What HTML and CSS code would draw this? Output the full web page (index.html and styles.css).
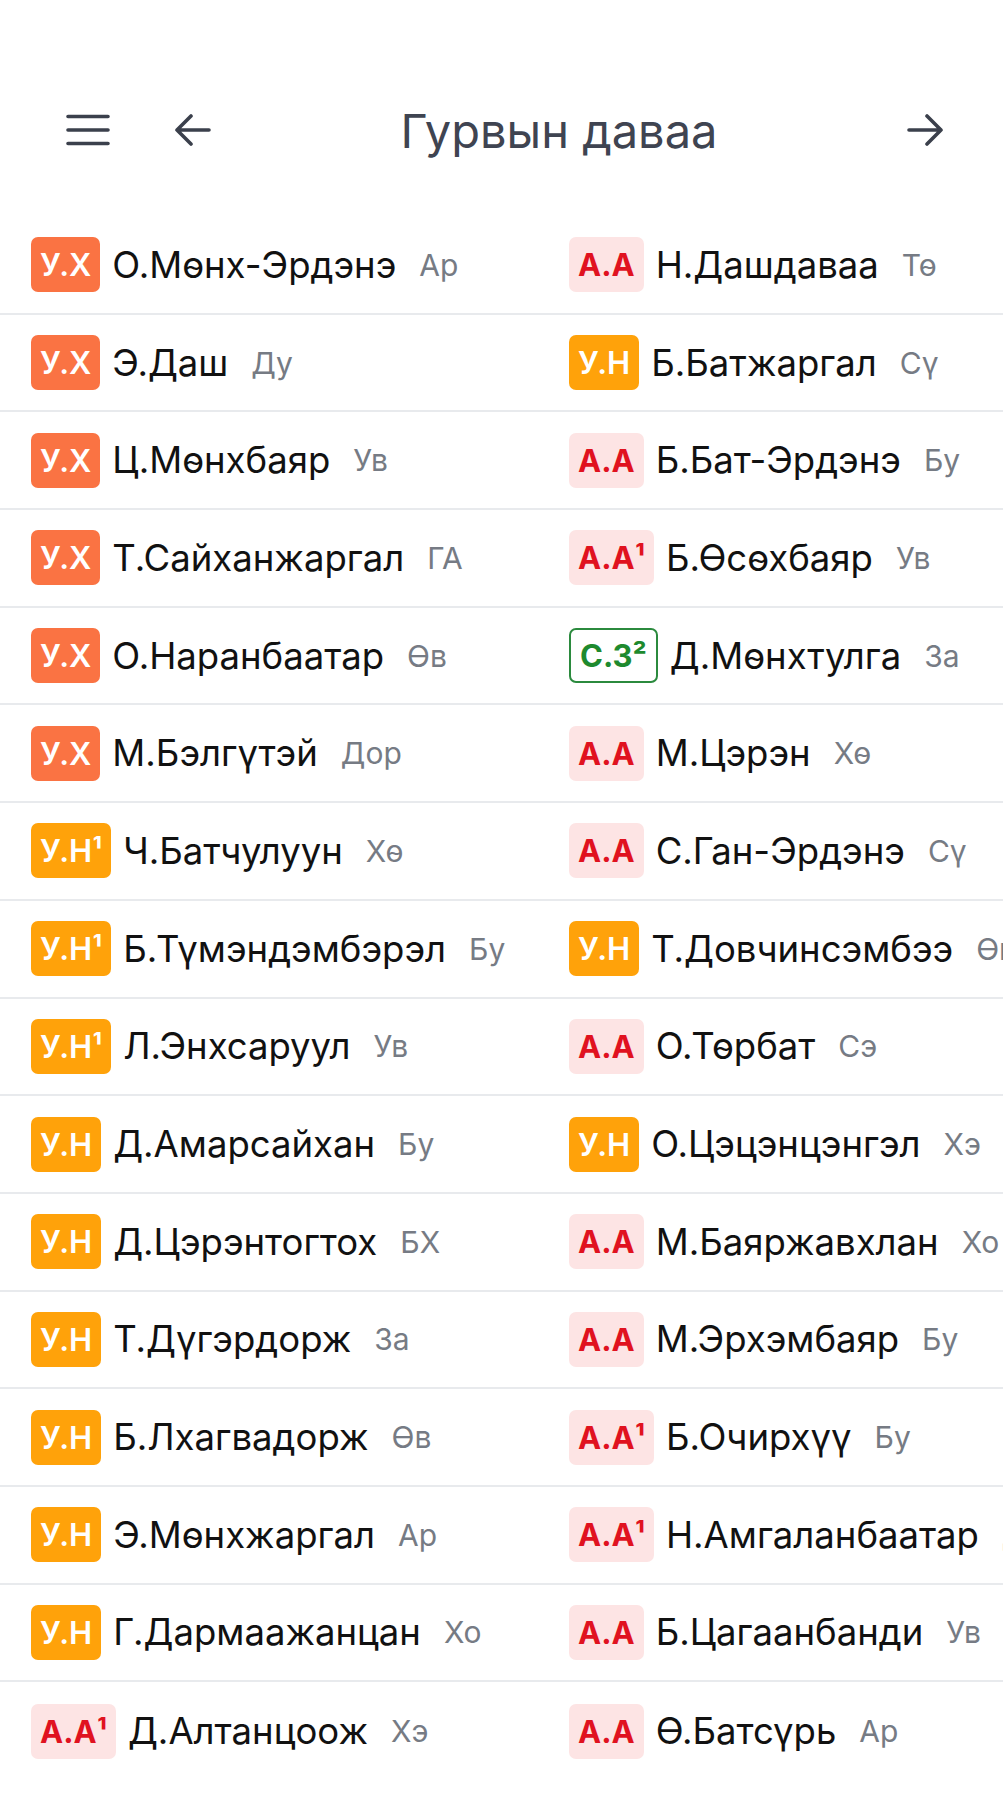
FILE: index.html
```html
<!DOCTYPE html>
<html lang="mn">
<head>
    <meta charset="UTF-8">
    <meta name="viewport" content="width=device-width, initial-scale=1.0">
    <title>Гурвын даваа</title>
    <link rel="stylesheet" href="styles.css">
</head>
<body>
    <header class="top-bar">
        <button class="icon-btn menu-btn" aria-label="Menu">
            <svg width="44" height="32" viewBox="0 0 44 32"><path d="M2 2.5H42M2 16H42M2 29.5H42"/></svg>
        </button>
        <button class="icon-btn" aria-label="Previous">
            <svg width="36" height="32" viewBox="0 0 36 32"><path d="M34 16H2M16 2L2 16L16 30"/></svg>
        </button>
        <h1 class="title">Гурвын даваа</h1>
        <button class="icon-btn" aria-label="Next">
            <svg width="36" height="32" viewBox="0 0 36 32"><path d="M2 16H34M20 2L34 16L20 30"/></svg>
        </button>
    </header>

    <div class="list-wrap">
        <div class="list">
            <div class="row"><span class="badge ux">У.Х</span><span class="name">О.Мөнх-Эрдэнэ</span><span class="region">Ар</span></div>
            <div class="row"><span class="badge aa">А.А</span><span class="name">Н.Дашдаваа</span><span class="region">Тө</span></div>

            <div class="row"><span class="badge ux">У.Х</span><span class="name">Э.Даш</span><span class="region">Ду</span></div>
            <div class="row"><span class="badge un">У.Н</span><span class="name">Б.Батжаргал</span><span class="region">Сү</span></div>

            <div class="row"><span class="badge ux">У.Х</span><span class="name">Ц.Мөнхбаяр</span><span class="region">Ув</span></div>
            <div class="row"><span class="badge aa">А.А</span><span class="name">Б.Бат-Эрдэнэ</span><span class="region">Бу</span></div>

            <div class="row"><span class="badge ux">У.Х</span><span class="name">Т.Сайханжаргал</span><span class="region">ГА</span></div>
            <div class="row"><span class="badge aa">А.А¹</span><span class="name">Б.Өсөхбаяр</span><span class="region">Ув</span></div>

            <div class="row"><span class="badge ux">У.Х</span><span class="name">О.Наранбаатар</span><span class="region">Өв</span></div>
            <div class="row"><span class="badge sz">С.З²</span><span class="name">Д.Мөнхтулга</span><span class="region">За</span></div>

            <div class="row"><span class="badge ux">У.Х</span><span class="name">М.Бэлгүтэй</span><span class="region">Дор</span></div>
            <div class="row"><span class="badge aa">А.А</span><span class="name">М.Цэрэн</span><span class="region">Хө</span></div>

            <div class="row"><span class="badge un">У.Н¹</span><span class="name">Ч.Батчулуун</span><span class="region">Хө</span></div>
            <div class="row"><span class="badge aa">А.А</span><span class="name">С.Ган-Эрдэнэ</span><span class="region">Сү</span></div>

            <div class="row"><span class="badge un">У.Н¹</span><span class="name">Б.Түмэндэмбэрэл</span><span class="region">Бу</span></div>
            <div class="row"><span class="badge un">У.Н</span><span class="name">Т.Довчинсэмбээ</span><span class="region">Өв</span></div>

            <div class="row"><span class="badge un">У.Н¹</span><span class="name">Л.Энхсаруул</span><span class="region">Ув</span></div>
            <div class="row"><span class="badge aa">А.А</span><span class="name">О.Төрбат</span><span class="region">Сэ</span></div>

            <div class="row"><span class="badge un">У.Н</span><span class="name">Д.Амарсайхан</span><span class="region">Бу</span></div>
            <div class="row"><span class="badge un">У.Н</span><span class="name">О.Цэцэнцэнгэл</span><span class="region">Хэ</span></div>

            <div class="row"><span class="badge un">У.Н</span><span class="name">Д.Цэрэнтогтох</span><span class="region">БХ</span></div>
            <div class="row"><span class="badge aa">А.А</span><span class="name">М.Баяржавхлан</span><span class="region">Хо</span></div>

            <div class="row"><span class="badge un">У.Н</span><span class="name">Т.Дүгэрдорж</span><span class="region">За</span></div>
            <div class="row"><span class="badge aa">А.А</span><span class="name">М.Эрхэмбаяр</span><span class="region">Бу</span></div>

            <div class="row"><span class="badge un">У.Н</span><span class="name">Б.Лхагвадорж</span><span class="region">Өв</span></div>
            <div class="row"><span class="badge aa">А.А¹</span><span class="name">Б.Очирхүү</span><span class="region">Бу</span></div>

            <div class="row"><span class="badge un">У.Н</span><span class="name">Э.Мөнхжаргал</span><span class="region">Ар</span></div>
            <div class="row"><span class="badge aa">А.А¹</span><span class="name">Н.Амгаланбаатар</span><span class="region">Ду</span></div>

            <div class="row"><span class="badge un">У.Н</span><span class="name">Г.Дармаажанцан</span><span class="region">Хо</span></div>
            <div class="row"><span class="badge aa">А.А</span><span class="name">Б.Цагаанбанди</span><span class="region">Ув</span></div>

            <div class="row"><span class="badge aa">А.А¹</span><span class="name">Д.Алтанцоож</span><span class="region">Хэ</span></div>
            <div class="row"><span class="badge aa">А.А</span><span class="name">Ө.Батсүрь</span><span class="region">Ар</span></div>
        </div>
    </div>
</body>
</html>
```

FILE: styles.css
```css
body {
    margin: 0;
    font-family: Inter, Roboto, "Noto Sans", sans-serif;
    background-color: #fff;
    color: #111;
    overflow-x: hidden;
}
.top-bar {
    display: flex;
    align-items: center;
    height: 68px;
    margin-top: 96px;
    margin-bottom: 53px;
    padding: 0 60px 0 66px;
}
.icon-btn {
    display: flex;
    background: none;
    border: none;
    padding: 0;
    cursor: pointer;
}
.icon-btn svg path {
    fill: none;
    stroke: #3b404c;
    stroke-width: 3.6;
    stroke-linecap: round;
    stroke-linejoin: round;
}
.menu-btn {
    margin-right: 65px;
}
.title {
    flex: 1;
    margin: 0;
    text-align: center;
    font-size: 47px;
    font-weight: 400;
    color: #3f4451;
}
.list-wrap {
    width: 100%;
    overflow: hidden;
}
.list {
    display: grid;
    grid-template-columns: 538px 538px;
    width: 1076px;
}
.row {
    display: flex;
    align-items: center;
    box-sizing: border-box;
    height: 97.7px;
    padding-left: 31px;
    border-bottom: 2px solid #e8eaed;
    white-space: nowrap;
}
.row:nth-last-child(-n+2) {
    border-bottom: none;
}
.badge {
    display: flex;
    align-items: center;
    box-sizing: border-box;
    height: 55px;
    padding: 0 9px;
    border-radius: 7px;
    font-size: 31px;
    font-weight: 600;
    color: #fff;
}
.ux {
    background-color: #fa7343;
}
.un {
    background-color: #ffa20a;
}
.aa {
    background-color: #fde4e4;
    color: #e0121f;
    font-weight: 700;
}
.sz {
    background-color: #fff;
    border: 2px solid #2b8a3e;
    color: #1e8a2e;
    font-weight: 700;
}
.name {
    margin-left: 12px;
    font-size: 36.5px;
    color: #111;
}
.region {
    margin-left: 23px;
    font-size: 30px;
    color: #767b84;
}
```
